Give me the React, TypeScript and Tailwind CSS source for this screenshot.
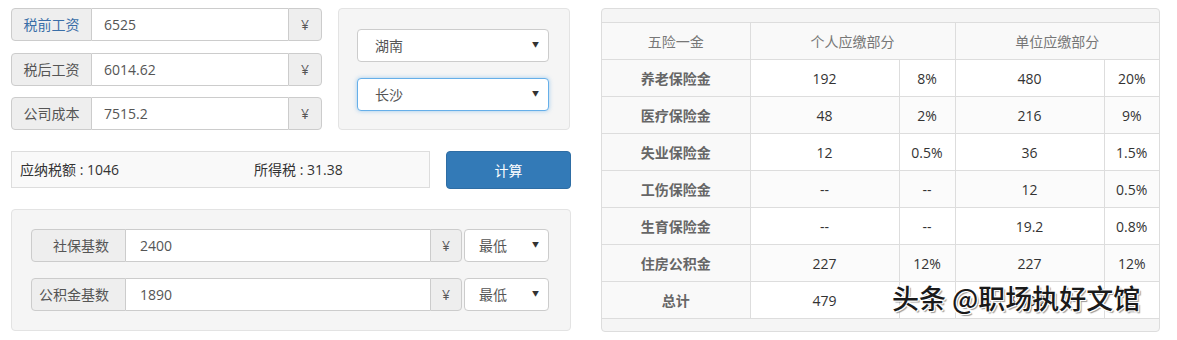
import { ReactElement, ReactNode } from "react";

const FONT = {
  fontFamily: "'Open Sans', 'Noto Sans CJK SC', sans-serif",
};

function InputRow({
  label,
  value,
  active = false,
}: {
  label: string;
  value: string;
  active?: boolean;
}): ReactElement {
  return (
    <div className="flex h-[33px] w-[311px] text-[14px]">
      <div
        className={
          "flex w-[81px] shrink-0 items-center justify-center rounded-l-[4px] border border-[#ccc] bg-[#eee] " +
          (active ? "text-[#3a6fa8]" : "text-[#555]")
        }
      >
        {label}
      </div>
      <div className="flex flex-1 items-center border-y border-[#ccc] bg-white pl-3 text-[#555]">
        {value}
      </div>
      <div className="flex w-[34px] shrink-0 items-center justify-center rounded-r-[4px] border border-[#ccc] bg-[#eee] text-[#555]">
        ¥
      </div>
    </div>
  );
}

function FakeSelect({
  value,
  focused = false,
  className = "",
}: {
  value: string;
  focused?: boolean;
  className?: string;
}): ReactElement {
  return (
    <div
      className={
        "flex items-center justify-between rounded-[4px] border bg-white text-[14px] text-[#555] " +
        (focused
          ? "border-[#66afe9] shadow-[0_0_4px_rgba(102,175,233,0.6)] "
          : "border-[#ccc] ") +
        className
      }
    >
      <span>{value}</span>
      <span className="text-[7px] text-[#333]">▼</span>
    </div>
  );
}

function BaseRow({ label, value }: { label: string; value: string }) {
  return (
    <div className="flex h-[33px] text-[14px]">
      <div className="flex w-[95px] shrink-0 items-center justify-end rounded-l-[4px] border border-[#ccc] bg-[#eee] pr-4 text-[#555]">
        {label}
      </div>
      <div className="flex w-[304px] items-center border-y border-[#ccc] bg-white pl-[14px] text-[#555]">
        {value}
      </div>
      <div className="flex w-[32px] shrink-0 items-center justify-center rounded-r-[4px] border border-[#ccc] bg-[#eee] text-[#555]">
        ¥
      </div>
      <FakeSelect
        value="最低"
        className="ml-[2px] h-[33px] w-[85px] pl-[14px] pr-[9px]"
      />
    </div>
  );
}

const ROWS: [string, string, string, string, string][] = [
  ["养老保险金", "192", "8%", "480", "20%"],
  ["医疗保险金", "48", "2%", "216", "9%"],
  ["失业保险金", "12", "0.5%", "36", "1.5%"],
  ["工伤保险金", "--", "--", "12", "0.5%"],
  ["生育保险金", "--", "--", "19.2", "0.8%"],
  ["住房公积金", "227", "12%", "227", "12%"],
  ["总计", "479", "", "990.2", ""],
];

function Cell({
  children,
  className = "",
  colSpan,
}: {
  children?: ReactNode;
  className?: string;
  colSpan?: number;
}) {
  return (
    <td
      colSpan={colSpan}
      className={
        "h-[37px] border border-[#ddd] p-0 text-center align-middle whitespace-nowrap " +
        className
      }
    >
      {children}
    </td>
  );
}

export default function App(): ReactElement {
  return (
    <div
      className="relative flex h-[340px] w-[1177px] gap-[30px] bg-white pl-[11px] pt-[8px]"
      style={FONT}
    >
      {/* Left side */}
      <div className="flex w-[560px] flex-col">
        <div className="flex gap-4">
          <div className="flex flex-col gap-[11.5px]">
            <InputRow label="税前工资" value="6525" active />
            <InputRow label="税后工资" value="6014.62" />
            <InputRow label="公司成本" value="7515.2" />
          </div>
          <div className="flex h-[122px] w-[232px] flex-col gap-4 rounded-[4px] border border-[#e3e3e3] bg-[#f5f5f5] pl-[18px] pt-[20px]">
            <FakeSelect value="湖南" className="h-[33px] w-[192px] pl-[17px] pr-[9px]" />
            <FakeSelect
              value="长沙"
              focused
              className="h-[33px] w-[192px] pl-[17px] pr-[9px]"
            />
          </div>
        </div>

        <div className="mt-[21px] flex gap-4">
          <div className="flex h-[37px] w-[419px] items-center border border-[#ddd] bg-[#f9f9f9] pl-2 text-[14px] text-[#333]">
            <span className="w-[234px]">应纳税额 : 1046</span>
            <span>所得税 : 31.38</span>
          </div>
          <div className="flex h-[38px] w-[125px] items-center justify-center rounded-[4px] border border-[#2e6da4] bg-[#337ab7] text-[14px] text-white">
            计算
          </div>
        </div>

        <div className="mt-[20px] flex h-[122px] w-[560px] flex-col gap-4 rounded-[4px] border border-[#e3e3e3] bg-[#f5f5f5] pl-[19px] pt-[19px]">
          <BaseRow label="社保基数" value="2400" />
          <BaseRow label="公积金基数" value="1890" />
        </div>
      </div>

      {/* Right side */}
      <div className="flex h-[324px] w-[559px] flex-col overflow-hidden rounded-[4px] border border-[#ddd] bg-[#f5f5f5]">
        <div className="h-[13px]" />
        <table className="w-full table-fixed border-collapse bg-white text-[14px] text-[#333]">
          <colgroup>
            <col className="w-[148px]" />
            <col className="w-[149px]" />
            <col className="w-[56px]" />
            <col className="w-[149px]" />
            <col />
          </colgroup>
          <thead>
            <tr className="bg-[#f9f9f9] text-[#777]">
              <Cell className="h-[36px] border-l-0">五险一金</Cell>
              <Cell className="h-[36px]" colSpan={2}>
                个人应缴部分
              </Cell>
              <Cell className="h-[36px] border-r-0" colSpan={2}>
                单位应缴部分
              </Cell>
            </tr>
          </thead>
          <tbody>
            {ROWS.map((r, i) => (
              <tr key={r[0]} className={i % 2 === 1 ? "bg-[#fbfbfb]" : ""}>
                <Cell className="border-l-0 bg-[#f9f9f9] font-bold text-[#666]">
                  {r[0]}
                </Cell>
                <Cell>{r[1]}</Cell>
                <Cell>{r[2]}</Cell>
                <Cell>{r[3]}</Cell>
                <Cell className="border-r-0">{r[4]}</Cell>
              </tr>
            ))}
          </tbody>
        </table>
        <div className="flex-1" />
      </div>

      {/* Watermark */}
      <div
        className="absolute left-[892px] top-[284px] text-[27px] leading-none font-medium text-[#1a1a1a]"
        style={{
          fontFamily: "'Noto Sans CJK SC', sans-serif",
          textShadow:
            "1px 1px 0 #fff, -1px -1px 0 #fff, 1px -1px 0 #fff, -1px 1px 0 #fff, 2px 2px 1px rgba(0,0,0,0.4)",
        }}
      >
        头条 @职场执好文馆
      </div>
    </div>
  );
}
